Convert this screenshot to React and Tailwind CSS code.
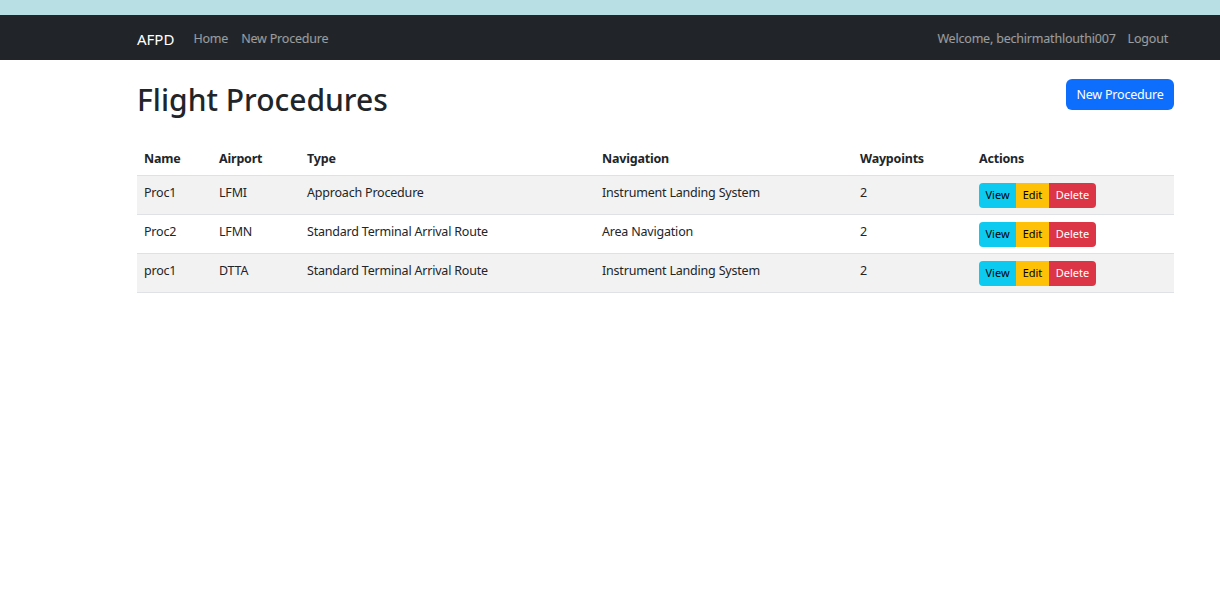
import React from "react";

const procedures = [
  { name: "Proc1", airport: "LFMI", type: "Approach Procedure", nav: "Instrument Landing System", waypoints: 2 },
  { name: "Proc2", airport: "LFMN", type: "Standard Terminal Arrival Route", nav: "Area Navigation", waypoints: 2 },
  { name: "proc1", airport: "DTTA", type: "Standard Terminal Arrival Route", nav: "Instrument Landing System", waypoints: 2 },
];

export default function App() {
  return (
    <div className="min-h-screen bg-white text-[#212529] font-['Noto_Sans',sans-serif]">
      <div className="h-[15px] bg-[#b8e0e4]" />

      {/* Navbar */}
      <nav className="h-[45px] bg-[#212529] flex items-center pl-[137px] pr-[52px] pt-[3px]">
        <span className="text-white text-[15px] mr-[19px]">AFPD</span>
        <a href="#" className="text-[12.5px] tracking-[-0.2px] text-white/55 mr-[13px]">Home</a>
        <a href="#" className="text-[12.5px] tracking-[-0.2px] text-white/55">New Procedure</a>
        <div className="ml-auto flex items-center gap-[12px] text-[12.5px] tracking-[-0.2px] text-white/55">
          <span>Welcome, bechirmathlouthi007</span>
          <a href="#">Logout</a>
        </div>
      </nav>

      <main className="pl-[137px] pr-[46px]">
        <div className="flex items-start justify-between pt-[19px]">
          <h1 className="text-[30px] font-medium leading-[1.2] mt-[3px]">Flight Procedures</h1>
          <button className="bg-[#0d6efd] text-white text-[12.5px] tracking-[-0.2px] rounded-[6px] h-[31px] w-[108px] pt-[2px]">
            New Procedure
          </button>
        </div>

        <table className="w-full table-fixed mt-[22px] text-[12.5px] tracking-[-0.2px] border-collapse">
          <thead>
            <tr className="border-b border-[#dee2e6] text-left">
              <th className="font-bold px-[7px] w-[75px] h-[35px] pt-[5px] pb-0">Name</th>
              <th className="font-bold px-[7px] w-[88px] h-[35px] pt-[5px] pb-0">Airport</th>
              <th className="font-bold px-[7px] w-[295px] h-[35px] pt-[5px] pb-0">Type</th>
              <th className="font-bold px-[7px] w-[258px] h-[35px] pt-[5px] pb-0">Navigation</th>
              <th className="font-bold px-[7px] w-[119px] h-[35px] pt-[5px] pb-0">Waypoints</th>
              <th className="font-bold px-[7px] h-[35px] pt-[5px] pb-0">Actions</th>
            </tr>
          </thead>
          <tbody>
            {procedures.map((p, i) => (
              <tr
                key={i}
                className={`border-b border-[#dee2e6] align-top ${i % 2 === 0 ? "bg-[#f2f2f2]" : "bg-white"}`}
              >
                <td className="px-[7px] pt-[8px] h-[39px]">{p.name}</td>
                <td className="px-[7px] pt-[8px] h-[39px]">{p.airport}</td>
                <td className="px-[7px] pt-[8px] h-[39px]">{p.type}</td>
                <td className="px-[7px] pt-[8px] h-[39px]">{p.nav}</td>
                <td className="px-[7px] pt-[8px] h-[39px]">{p.waypoints}</td>
                <td className="px-[7px] pt-[7px] h-[39px]">
                  <div className="flex text-[11px] tracking-normal h-[25px]">
                    <button className="bg-[#0dcaf0] text-black rounded-l-[4px] w-[37px]">View</button>
                    <button className="bg-[#ffc107] text-black w-[33px]">Edit</button>
                    <button className="bg-[#dc3545] text-white rounded-r-[4px] w-[47px]">Delete</button>
                  </div>
                </td>
              </tr>
            ))}
          </tbody>
        </table>
      </main>
    </div>
  );
}
